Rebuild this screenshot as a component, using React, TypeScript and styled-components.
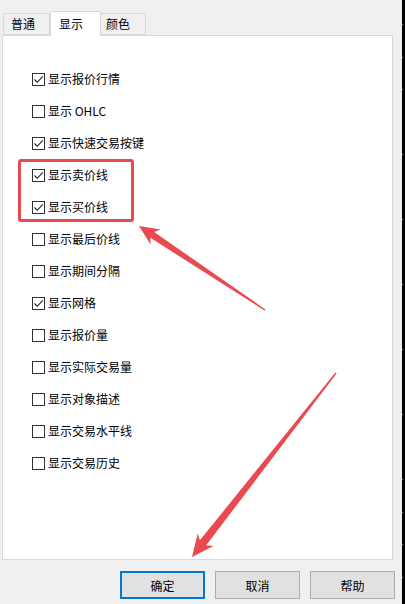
import React from 'react';
import styled, { createGlobalStyle } from 'styled-components';

const GlobalStyle = createGlobalStyle`
  html, body {
    margin: 0;
    padding: 0;
    width: 405px;
    height: 604px;
    overflow: hidden;
    background: #f0f0f0;
  }
  body {
    font-family: "Noto Sans CJK SC", "Microsoft YaHei", sans-serif;
    font-size: 12px;
    color: #000;
  }
`;

interface IOption {
  label: string;
  checked: boolean;
}

const options: IOption[] = [
  { label: '显示报价行情', checked: true },
  { label: '显示 OHLC', checked: false },
  { label: '显示快速交易按键', checked: true },
  { label: '显示卖价线', checked: true },
  { label: '显示买价线', checked: true },
  { label: '显示最后价线', checked: false },
  { label: '显示期间分隔', checked: false },
  { label: '显示网格', checked: true },
  { label: '显示报价量', checked: false },
  { label: '显示实际交易量', checked: false },
  { label: '显示对象描述', checked: false },
  { label: '显示交易水平线', checked: false },
  { label: '显示交易历史', checked: false },
];

const tabs = [
  { label: '普通', width: 47, pad: 7 },
  { label: '显示', width: 51, pad: 8, active: true },
  { label: '颜色', width: 45, pad: 5 },
];

const CheckMark: React.FC = () => (
  <svg width="11" height="11" viewBox="0 0 11 11">
    <polyline points="1.5,5.5 4.3,8.3 9.8,2.3" fill="none" stroke="#222" strokeWidth="1.1" />
  </svg>
);

export default function App() {
  return (
    <>
      <GlobalStyle />
      <Screen>
        <Dialog>
          <TabBar>
            {tabs.map((t) => (
              <Tab key={t.label} $active={!!t.active} $width={t.width} $pad={t.pad}>
                {t.label}
              </Tab>
            ))}
          </TabBar>
          <Panel>
            <OptionList>
              {options.map((o) => (
                <OptionRow key={o.label}>
                  <Box>{o.checked && <CheckMark />}</Box>
                  <OptionLabel>{o.label}</OptionLabel>
                </OptionRow>
              ))}
            </OptionList>
          </Panel>
          <Footer>
            <Button $primary>确定</Button>
            <Button>取消</Button>
            <Button>帮助</Button>
          </Footer>
        </Dialog>
        <EdgeStrip />

        <Highlight />
        <Arrows width="405" height="604" viewBox="0 0 405 604">
          <polygon
            fill="#e84a4f"
            points="139,226 160.6,229.6 154.2,232 265.4,309.4 264.6,310.6 150.4,237.8 150.6,244.6"
          />
          <polygon
            fill="#e84a4f"
            points="192,557 197.7,533.5 199.9,540.3 335.4,372.6 336.6,373.4 206.2,545.3 213.5,545.9"
          />
        </Arrows>
      </Screen>
    </>
  );
}

const Screen = styled.div`
  position: relative;
  width: 405px;
  height: 604px;
  display: flex;
  flex-direction: row;
  background: #f0f0f0;
`;

const Dialog = styled.div`
  width: 402px;
  display: flex;
  flex-direction: column;
  padding-top: 11px;
  box-sizing: border-box;
`;

const EdgeStrip = styled.div`
  width: 3px;
  height: 100%;
  background-color: #000;
  background-image: repeating-linear-gradient(
    to bottom,
    transparent 0,
    transparent 24px,
    #8a8a8a 24px,
    #8a8a8a 25px,
    transparent 25px,
    transparent 32.5px
  );
  background-size: 1px 100%;
  background-repeat: no-repeat;
`;

const TabBar = styled.div`
  display: flex;
  align-items: flex-end;
  height: 24px;
  margin-left: 3px;
  position: relative;
  z-index: 1;
`;

const Tab = styled.div<{ $active: boolean; $width: number; $pad: number }>`
  box-sizing: border-box;
  width: ${(p) => p.$width}px;
  height: ${(p) => (p.$active ? 25 : 22)}px;
  padding-left: ${(p) => p.$pad}px;
  margin-bottom: ${(p) => (p.$active ? -1 : 0)}px;
  display: flex;
  align-items: center;
  background: ${(p) => (p.$active ? '#fff' : '#f0f0f0')};
  border: 1px solid #d9d9d9;
  border-bottom: ${(p) => (p.$active ? 'none' : '1px solid #d9d9d9')};
  border-left: ${(p) => (p.$active ? '1px solid #d9d9d9' : 'none')};
  &:first-child {
    border-left: 1px solid #d9d9d9;
  }
  &:last-child {
    border-left: none;
  }
  font-size: 12px;
  line-height: 1;
`;

const Panel = styled.div`
  box-sizing: border-box;
  width: 391px;
  height: 525px;
  margin-left: 2px;
  background: #fff;
  border: 1px solid #d9d9d9;
`;

const OptionList = styled.div`
  display: flex;
  flex-direction: column;
  padding: 27px 0 0 29px;
`;

const OptionRow = styled.div`
  height: 32px;
  display: flex;
  align-items: center;
  gap: 3px;
`;

const Box = styled.span`
  box-sizing: border-box;
  width: 13px;
  height: 13px;
  border: 1px solid #333;
  background: #fff;
  display: flex;
  align-items: center;
  justify-content: center;
`;

const OptionLabel = styled.span`
  font-size: 12px;
  line-height: 1;
  color: #000;
`;

const Footer = styled.div`
  display: flex;
  justify-content: flex-end;
  gap: 10px;
  margin-top: 11px;
  padding-right: 7px;
`;

const Button = styled.button<{ $primary?: boolean }>`
  box-sizing: border-box;
  width: 85px;
  height: 28px;
  background: #e1e1e1;
  border: ${(p) => (p.$primary ? '2px solid #0078d7' : '1px solid #adadad')};
  font-family: "Noto Sans CJK SC", "Microsoft YaHei", sans-serif;
  font-size: 12px;
  color: #000;
  padding: 0;
`;

const Highlight = styled.div`
  position: absolute;
  left: 18px;
  top: 159px;
  width: 116px;
  height: 63px;
  box-sizing: border-box;
  border: 3px solid #e84a4f;
  border-radius: 3px;
  pointer-events: none;
`;

const Arrows = styled.svg`
  position: absolute;
  left: 0;
  top: 0;
  pointer-events: none;
`;
